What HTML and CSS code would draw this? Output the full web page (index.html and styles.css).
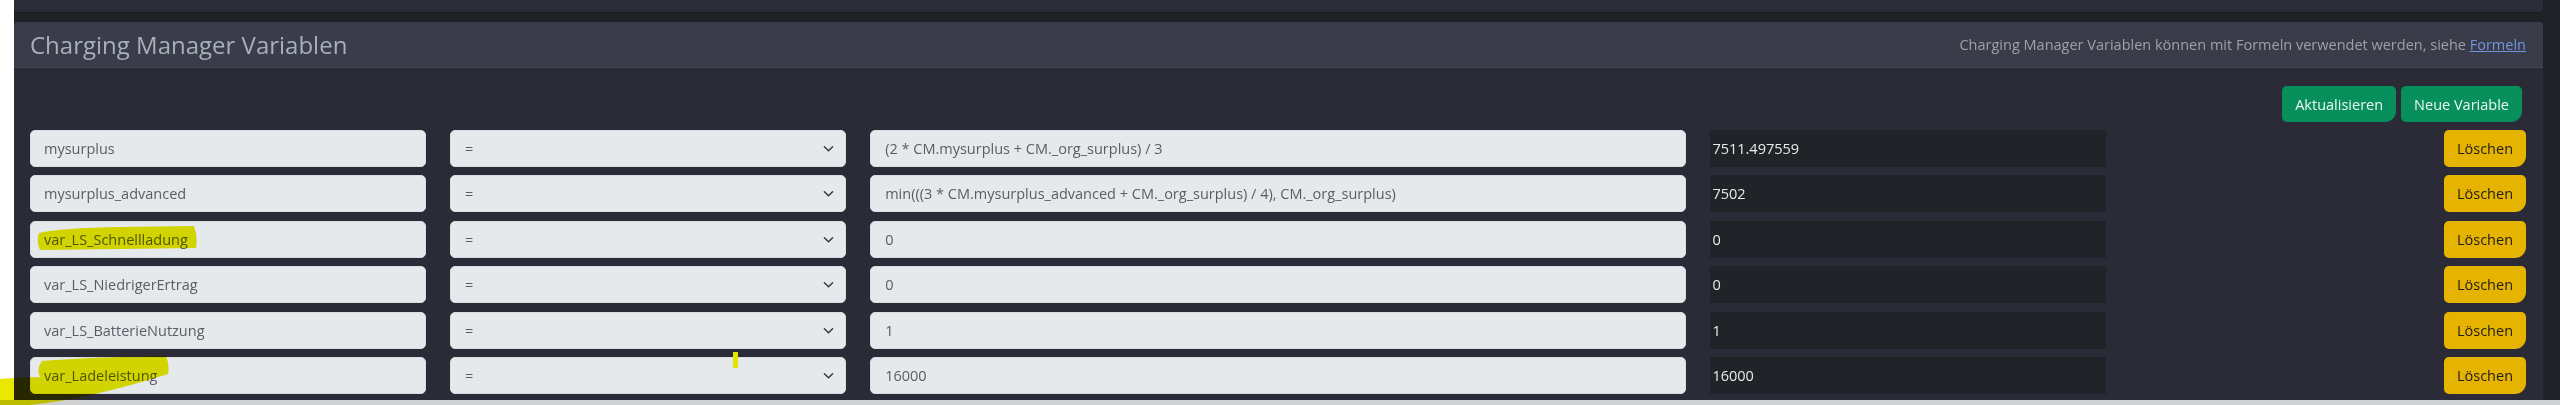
FILE: index.html
```html
<!DOCTYPE html>
<html lang="de">
<head>
<meta charset="utf-8">
<title>Charging Manager Variablen</title>
<link rel="stylesheet" href="styles.css">
</head>
<body>
<div class="viewport">
  <div class="app">
    <div class="top-panel"></div>
    <section class="card">
      <header class="card-header">
        <h5 class="card-title">Charging Manager Variablen</h5>
        <div class="hint">Charging Manager Variablen können mit Formeln verwendet werden, siehe <a href="#">Formeln</a></div>
      </header>
      <div class="card-body">
        <div class="actions">
          <button class="btn btn-success">Aktualisieren</button>
          <button class="btn btn-success">Neue Variable</button>
        </div>
        <div class="var-grid">
          <input class="field" value="mysurplus">
          <div class="select-wrap"><select class="field select"><option>=</option></select><svg class="chev" viewBox="0 0 12 8"><path d="M1.5 1.5 6 6l4.5-4.5" fill="none" stroke="#343a40" stroke-width="1.6" stroke-linecap="round" stroke-linejoin="round"/></svg></div>
          <input class="field formula" value="(2 * CM.mysurplus + CM._org_surplus) / 3">
          <div class="result">7511.497559</div>
          <div class="del"><button class="btn btn-warning">Löschen</button></div>

          <input class="field" value="mysurplus_advanced">
          <div class="select-wrap"><select class="field select"><option>=</option></select><svg class="chev" viewBox="0 0 12 8"><path d="M1.5 1.5 6 6l4.5-4.5" fill="none" stroke="#343a40" stroke-width="1.6" stroke-linecap="round" stroke-linejoin="round"/></svg></div>
          <input class="field formula" value="min(((3 * CM.mysurplus_advanced + CM._org_surplus) / 4), CM._org_surplus)">
          <div class="result">7502</div>
          <div class="del"><button class="btn btn-warning">Löschen</button></div>

          <input class="field" value="var_LS_Schnellladung">
          <div class="select-wrap"><select class="field select"><option>=</option></select><svg class="chev" viewBox="0 0 12 8"><path d="M1.5 1.5 6 6l4.5-4.5" fill="none" stroke="#343a40" stroke-width="1.6" stroke-linecap="round" stroke-linejoin="round"/></svg></div>
          <input class="field formula" value="0">
          <div class="result">0</div>
          <div class="del"><button class="btn btn-warning">Löschen</button></div>

          <input class="field" value="var_LS_NiedrigerErtrag">
          <div class="select-wrap"><select class="field select"><option>=</option></select><svg class="chev" viewBox="0 0 12 8"><path d="M1.5 1.5 6 6l4.5-4.5" fill="none" stroke="#343a40" stroke-width="1.6" stroke-linecap="round" stroke-linejoin="round"/></svg></div>
          <input class="field formula" value="0">
          <div class="result">0</div>
          <div class="del"><button class="btn btn-warning">Löschen</button></div>

          <input class="field" value="var_LS_BatterieNutzung">
          <div class="select-wrap"><select class="field select"><option>=</option></select><svg class="chev" viewBox="0 0 12 8"><path d="M1.5 1.5 6 6l4.5-4.5" fill="none" stroke="#343a40" stroke-width="1.6" stroke-linecap="round" stroke-linejoin="round"/></svg></div>
          <input class="field formula" value="1">
          <div class="result">1</div>
          <div class="del"><button class="btn btn-warning">Löschen</button></div>

          <input class="field" value="var_Ladeleistung">
          <div class="select-wrap"><select class="field select"><option>=</option></select><svg class="chev" viewBox="0 0 12 8"><path d="M1.5 1.5 6 6l4.5-4.5" fill="none" stroke="#343a40" stroke-width="1.6" stroke-linecap="round" stroke-linejoin="round"/></svg></div>
          <input class="field formula" value="16000">
          <div class="result">16000</div>
          <div class="del"><button class="btn btn-warning">Löschen</button></div>
        </div>
      </div>
    </section>
  </div>
  <div class="statusbar"></div>

  <svg class="marker" viewBox="0 0 2560 405" preserveAspectRatio="none" aria-hidden="true">
    <path class="hl" d="M39 233 Q60 228 120 227 L194 226 Q198 236 196 248 L120 249 L40 250 Q36 242 39 233 Z"/>
    <path class="hl" d="M42 361 Q90 357 166 356 Q170 366 168 374 Q130 386 95 394 Q60 402 30 405 L0 405 L0 379 Q20 377 40 377 Q36 369 42 361 Z"/>
    <rect class="tick" x="733" y="352" width="5" height="16"/>
  </svg>
</div>
</body>
</html>
```
FILE: styles.css
```css
html, body {
  margin: 0;
  padding: 0;
}

body {
  width: 2560px;
  height: 405px;
  overflow: hidden;
  background: #ffffff;
  font-family: "Open Sans", "Noto Sans", sans-serif;
  font-size: 14.5px;
}

.viewport {
  position: relative;
  width: 2560px;
  height: 405px;
  display: flex;
  flex-direction: column;
}

.app {
  height: 400px;
  overflow: hidden;
  background: #212228;
  margin-left: 14px;
  padding-right: 17px;
  display: flex;
  flex-direction: column;
}

.statusbar {
  height: 5px;
  background: #cfd0d2;
}

.top-panel {
  height: 12px;
  background: #2b2c38;
  border-radius: 0 0 4px 4px;
  box-shadow: 0 1px 0 #1b1c21;
}

.card {
  margin-top: 10px;
  background: #2b2b37;
  border-radius: 4px 4px 0 0;
  flex: 1;
}

.card-header {
  height: 46px;
  box-sizing: border-box;
  background: #3a3d49;
  border-bottom: 1px solid #444753;
  border-radius: 4px 4px 0 0;
  display: flex;
  align-items: center;
  justify-content: space-between;
  padding: 0 17px 0 16px;
}

.card-title {
  margin: 0;
  font-size: 24px;
  font-weight: 400;
  color: #a7afbb;
  letter-spacing: 0;
}

.hint {
  color: #9aa1ac;
  font-size: 14.5px;
}

.hint a {
  color: #7094de;
  text-decoration: underline;
}

.card-body {
  padding: 18px 17px 6px 16px;
}

.actions {
  display: flex;
  justify-content: flex-end;
  gap: 5px;
  margin-right: 4px;
  margin-bottom: 8px;
}

.btn {
  height: 36px;
  border: none;
  border-radius: 5px 5px 11px 5px;
  padding: 0 13px;
  font-family: "Open Sans", "Noto Sans", sans-serif;
  font-size: 14.5px;
  cursor: pointer;
}

.btn-success {
  background: #078f5c;
  color: #eef7f2;
}

.btn-warning {
  height: 37px;
  width: 82px;
  padding: 0;
  background: #e5b300;
  color: #1d1d1d;
}

.var-grid {
  display: grid;
  grid-template-columns: repeat(6, 1fr);
  column-gap: 24.6px;
  row-gap: 8.4px;
  grid-auto-rows: 37px;
}

.field {
  box-sizing: border-box;
  width: 100%;
  height: 37px;
  margin: 0;
  border: 1px solid #d9dde1;
  border-radius: 5px;
  background: #e6e9ec;
  color: #585e65;
  padding: 0 13px;
  font-family: "Open Sans", "Noto Sans", sans-serif;
  font-size: 14.5px;
  outline: none;
}

.formula {
  grid-column: span 2;
  padding-left: 14px;
}

.select-wrap {
  position: relative;
}

.select {
  appearance: none;
  -webkit-appearance: none;
  padding-left: 14px;
}

.chev {
  position: absolute;
  right: 12px;
  top: 15px;
  width: 11px;
  height: 8px;
  pointer-events: none;
}

.result {
  height: 37px;
  background: #212329;
  color: #e8eaec;
  display: flex;
  align-items: center;
  padding-left: 2px;
}

.del {
  display: flex;
  justify-content: flex-end;
}

.marker {
  position: absolute;
  left: 0;
  top: 0;
  width: 2560px;
  height: 405px;
  pointer-events: none;
}

.hl {
  fill: #e8e800;
  mix-blend-mode: multiply;
}

.tick {
  fill: #e4e400;
}
```
